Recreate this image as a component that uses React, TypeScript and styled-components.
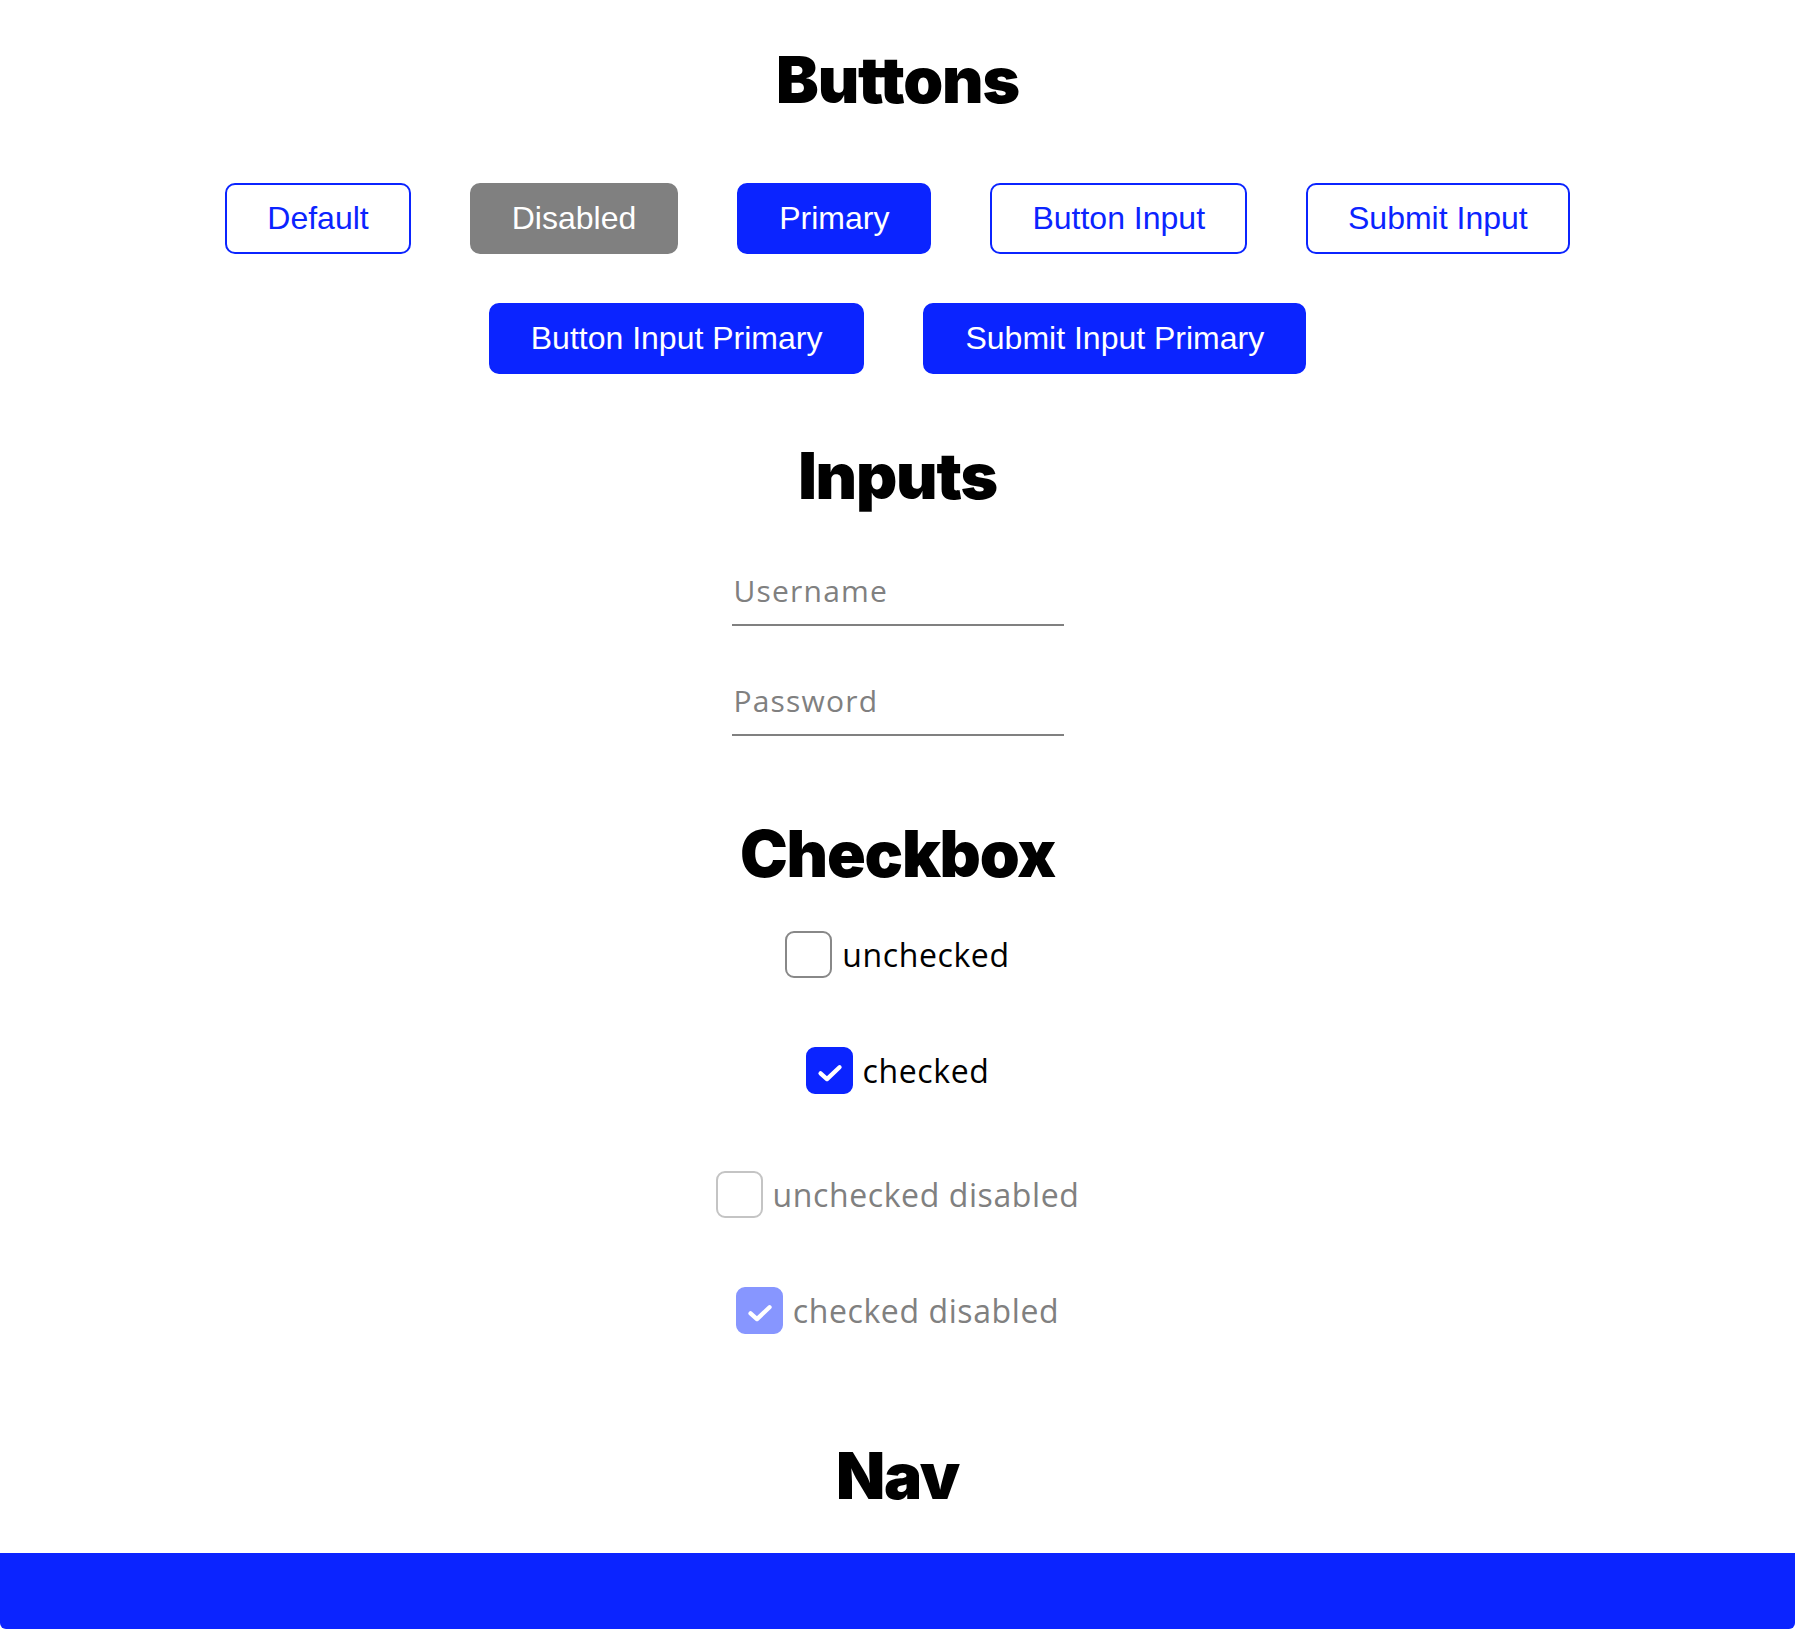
import React from 'react'
import styled, { createGlobalStyle } from 'styled-components'

const BLUE = '#0b24ff'
const GREY = '#808080'

const GlobalStyle = createGlobalStyle`
  body {
    margin: 0;
    background: #fff;
    font-family: 'Open Sans', 'Liberation Sans', sans-serif;
  }
`

const Page = styled.main`
  display: flex;
  flex-direction: column;
  align-items: center;
`

const Heading = styled.h1<{ $top: number }>`
  margin: ${(p) => p.$top}px 0 0;
  font-family: Inter, 'Liberation Sans', sans-serif;
  font-weight: 900;
  font-size: 64px;
  line-height: 1;
  color: #000;
  letter-spacing: -1.2px;
`

const ButtonGroup = styled.div`
  margin-top: 71px;
  display: flex;
  flex-wrap: wrap;
  justify-content: center;
  column-gap: 59px;
  row-gap: 49px;
  max-width: 1400px;
`

const Button = styled.button<{ $variant?: 'default' | 'primary' | 'disabled' }>`
  font-family: 'Liberation Sans', Arial, sans-serif;
  font-size: 32px;
  line-height: 37px;
  padding: 15px 40px;
  border-radius: 10px;
  border: 2px solid ${(p) => (p.$variant === 'disabled' ? GREY : BLUE)};
  background: ${(p) =>
    p.$variant === 'primary' ? BLUE : p.$variant === 'disabled' ? GREY : '#fff'};
  color: ${(p) => (p.$variant === 'default' || !p.$variant ? BLUE : '#fff')};
  cursor: ${(p) => (p.$variant === 'disabled' ? 'default' : 'pointer')};
`

const Field = styled.input<{ $top: number }>`
  margin-top: ${(p) => p.$top}px;
  width: 332px;
  box-sizing: border-box;
  padding: 0 0 15px 2px;
  border: none;
  border-bottom: 2px solid ${GREY};
  outline: none;
  font-family: 'Open Sans', sans-serif;
  font-size: 30px;
  line-height: 36px;
  letter-spacing: 1.2px;
  color: #000;
  background: transparent;

  &::placeholder {
    color: ${GREY};
  }
`

const CheckList = styled.div`
  margin-top: 45px;
  display: flex;
  flex-direction: column;
  align-items: center;
  gap: 69px;
`

const CheckRow = styled.label<{ $disabled?: boolean; $push?: number }>`
  display: flex;
  align-items: center;
  gap: 10px;
  margin-top: ${(p) => p.$push ?? 0}px;
  font-family: 'Open Sans', sans-serif;
  font-size: 32px;
  line-height: 47px;
  letter-spacing: 0.6px;
  color: ${(p) => (p.$disabled ? GREY : '#000')};
`

const Box = styled.span<{ $checked?: boolean; $disabled?: boolean }>`
  width: 47px;
  height: 47px;
  box-sizing: border-box;
  border-radius: 9px;
  display: flex;
  align-items: center;
  justify-content: center;
  border: 2px solid
    ${(p) =>
      p.$checked ? (p.$disabled ? '#8796ff' : BLUE) : p.$disabled ? '#c4c4c4' : '#888'};
  background: ${(p) => (p.$checked ? (p.$disabled ? '#8796ff' : BLUE) : '#fff')};
`

const NavBar = styled.nav`
  margin-top: 45px;
  align-self: stretch;
  height: 76px;
  background: ${BLUE};
  border-radius: 0 0 6px 6px;
`

const Check = () => (
  <svg width="47" height="47" viewBox="0 0 24 24" fill="none">
    <polyline
      points="7,13.6 10.6,16.8 17.6,10.2"
      stroke="#fff"
      strokeWidth="2.4"
      strokeLinecap="round"
      strokeLinejoin="round"
    />
  </svg>
)

const Checkbox = ({
  label,
  checked,
  disabled,
  push,
}: {
  label: string
  checked?: boolean
  disabled?: boolean
  push?: number
}) => (
  <CheckRow $disabled={disabled} $push={push}>
    <Box $checked={checked} $disabled={disabled}>
      {checked && <Check />}
    </Box>
    {label}
  </CheckRow>
)

export default function App() {
  return (
    <>
      <GlobalStyle />
      <Page>
        <Heading $top={48}>Buttons</Heading>
        <ButtonGroup>
          <Button $variant="default">Default</Button>
          <Button $variant="disabled" disabled>
            Disabled
          </Button>
          <Button $variant="primary">Primary</Button>
          <Button $variant="default">Button Input</Button>
          <Button $variant="default">Submit Input</Button>
          <Button $variant="primary">Button Input Primary</Button>
          <Button $variant="primary">Submit Input Primary</Button>
        </ButtonGroup>

        <Heading $top={70}>Inputs</Heading>
        <Field $top={65} placeholder="Username" />
        <Field $top={57} type="password" placeholder="Password" />

        <Heading $top={86}>Checkbox</Heading>
        <CheckList>
          <Checkbox label="unchecked" />
          <Checkbox label="checked" checked />
          <Checkbox label="unchecked disabled" disabled push={8} />
          <Checkbox label="checked disabled" checked disabled />
        </CheckList>

        <Heading $top={110}>Nav</Heading>
        <NavBar />
      </Page>
    </>
  )
}
